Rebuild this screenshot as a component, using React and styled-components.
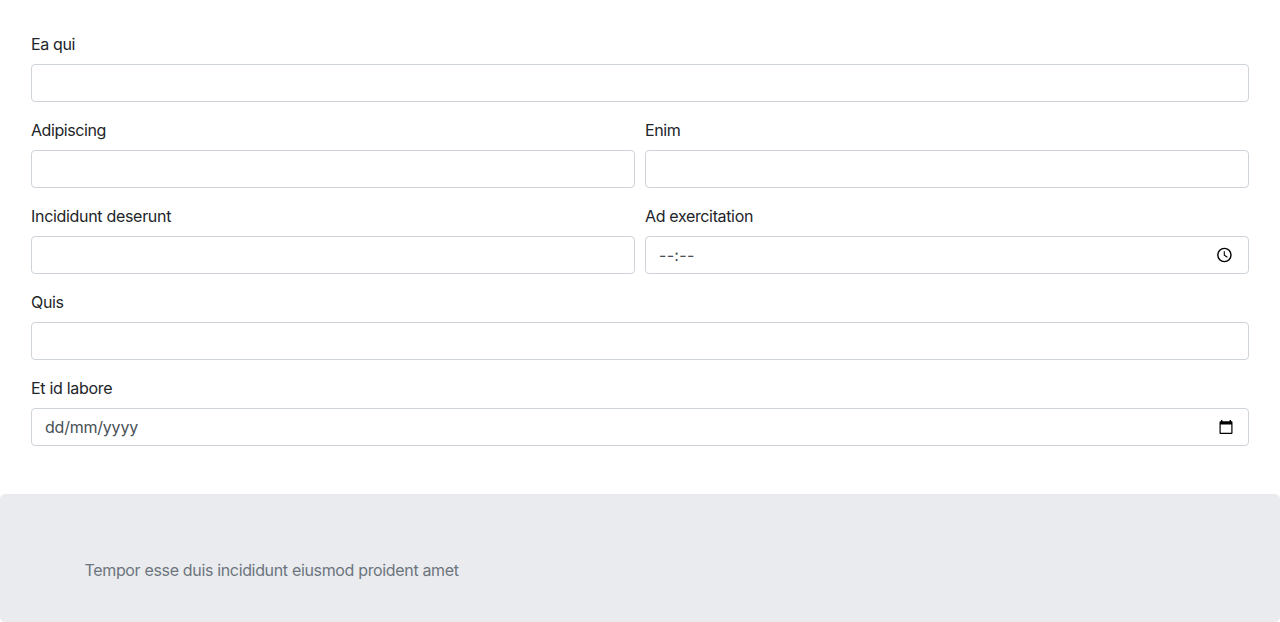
import React from "react";
import styled, { createGlobalStyle } from "styled-components";

const GlobalStyle = createGlobalStyle`
  *, *::before, *::after { box-sizing: border-box; }
  body {
    margin: 0;
    background: #fff;
    color: #212529;
    font-family: Inter, "Liberation Sans", sans-serif;
    font-size: 16px;
    line-height: 24px;
  }
`;

const Form = styled.form`
  display: flex;
  flex-direction: column;
  gap: 16px;
  padding: 32px 31px 48px;
`;

const Row = styled.div`
  display: grid;
  grid-template-columns: repeat(${(p) => p.$columns || 1}, 1fr);
  gap: 10px;
`;

const Field = styled.div`
  display: flex;
  flex-direction: column;
  gap: 8px;
`;

const Label = styled.label`
  align-self: flex-start;
  white-space: nowrap;
  letter-spacing: ${(p) => p.$tracking}px;
`;

const Control = styled.div`
  display: flex;
  align-items: center;
  justify-content: space-between;
  height: 38px;
  padding: 0 ${(p) => p.$inset || 12}px 0 13px;
  border: 1px solid #ced4da;
  border-radius: 4px;
  background: #fff;
  color: #495057;
`;

const Value = styled.span`
  white-space: pre;
  letter-spacing: ${(p) => p.$tracking}px;
`;

const Banner = styled.section`
  height: 128px;
  padding: 64px 84.5px 40px;
  border-radius: 5px;
  background: #eaebef;
  color: #6c757d;
`;

const BannerText = styled.p`
  margin: 0;
  width: max-content;
  letter-spacing: -0.34px;
`;

const ClockIcon = () => (
  <svg width="16" height="16" viewBox="0 0 16 16" fill="none" stroke="#000">
    <circle cx="8.4" cy="8" r="6.6" strokeWidth="1.4" />
    <path d="M8.3 4.2V8.2L11.4 10.2" strokeWidth="1.1" />
  </svg>
);

const CalendarIcon = () => (
  <svg width="14" height="16" viewBox="0 0 14 16" fill="#000">
    <path
      fillRule="evenodd"
      d="M2 1H3.4V2.3H10.6V1H12V2.3H12.6Q13.5 2.3 13.5 3.2V14Q13.5 14.9 12.6 14.9H1.4Q.5 14.9 .5 14V3.2Q.5 2.3 1.4 2.3H2ZM1.7 5.6V13.7H12.3V5.6Z"
    />
  </svg>
);

const TextField = ({ label, tracking = -0.35, children, inset }) => (
  <Field>
    <Label $tracking={tracking}>{label}</Label>
    <Control $inset={inset}>{children}</Control>
  </Field>
);

export default function App() {
  return (
    <>
      <GlobalStyle />
      <Form>
        <Row>
          <TextField label="Ea qui" />
        </Row>
        <Row $columns={2}>
          <TextField label="Adipiscing" tracking={-0.42} />
          <TextField label="Enim" tracking={-0.4} />
        </Row>
        <Row $columns={2}>
          <TextField label="Incididunt deserunt" tracking={-0.31} />
          <TextField label="Ad exercitation" inset={16}>
            <Value $tracking={0.3}>--:--</Value>
            <ClockIcon />
          </TextField>
        </Row>
        <Row>
          <TextField label="Quis" />
        </Row>
        <Row>
          <TextField label="Et id labore" tracking={-0.3} inset={15}>
            <Value $tracking={-0.22}>dd/mm/yyyy</Value>
            <CalendarIcon />
          </TextField>
        </Row>
      </Form>
      <Banner>
        <BannerText>Tempor esse duis incididunt eiusmod proident amet</BannerText>
      </Banner>
    </>
  );
}
